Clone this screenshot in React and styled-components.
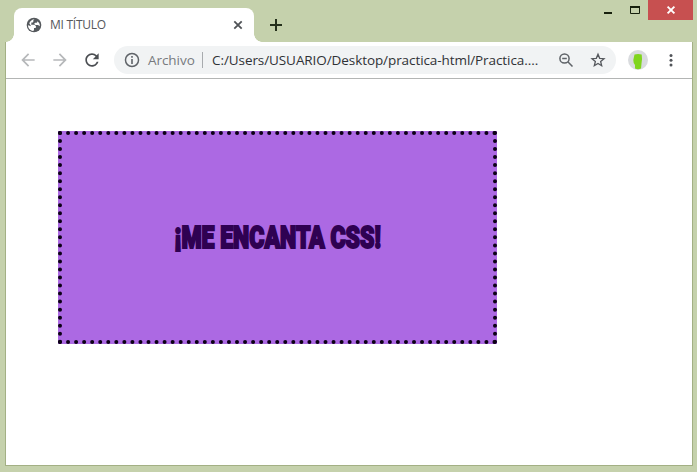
import React from "react";
import styled, { createGlobalStyle } from "styled-components";

const GlobalStyle = createGlobalStyle`
  * { box-sizing: border-box; }
  body { margin: 0; overflow: hidden; }
`;

const Window = styled.div`
  display: flex;
  flex-direction: column;
  width: 697px;
  height: 472px;
  padding: 0 4px 6px 5px;
  background: #c5d1ac;
  font-family: "Open Sans", "Noto Sans", sans-serif;
`;

const TitleBar = styled.header`
  display: flex;
  align-items: flex-start;
  height: 42px;
  flex: none;
`;

const Tab = styled.div`
  position: relative;
  display: flex;
  align-items: center;
  width: 240px;
  height: 34px;
  margin: 8px 0 0 9px;
  padding: 0 10px 0 12px;
  background: #fff;
  border-radius: 8px 8px 0 0;

  &::before,
  &::after {
    content: "";
    position: absolute;
    bottom: 0;
    width: 8px;
    height: 8px;
  }
  &::before {
    left: -8px;
    background: radial-gradient(circle at 0 0, transparent 7.5px, #fff 8px);
  }
  &::after {
    right: -8px;
    background: radial-gradient(circle at 100% 0, transparent 7.5px, #fff 8px);
  }
`;

const TabTitle = styled.span`
  flex: 1;
  margin-left: 8px;
  color: #55575b;
  font-size: 12px;
  line-height: 16px;
  letter-spacing: -0.25px;
`;

const NewTab = styled.div`
  display: flex;
  margin: 18px 0 0 15px;
`;

const Controls = styled.div`
  display: flex;
  height: 20px;
  margin-left: auto;
`;

const Control = styled.div`
  display: flex;
  align-items: center;
  justify-content: center;
  width: ${(p) => p.$width}px;
  height: 20px;
  background: ${(p) => (p.$danger ? "#c75050" : "transparent")};
`;

const Body = styled.div`
  display: flex;
  flex-direction: column;
  flex: 1;
  border: 1px solid #a3b084;
  border-top: 0;
  background: #fff;
`;

const Toolbar = styled.nav`
  display: flex;
  align-items: center;
  height: 37px;
  flex: none;
  padding: 0 13px 0 12px;
  border-bottom: 1px solid #b3b5b4;
`;

const NavButtons = styled.div`
  display: flex;
  gap: 12px;
  width: 96px;
`;

const Address = styled.div`
  display: flex;
  align-items: center;
  width: 502px;
  height: 28px;
  padding: 0 10px;
  border-radius: 14px;
  background: #f1f3f4;
`;

const Scheme = styled.span`
  width: 54px;
  margin-left: 8px;
  color: #777a7e;
  font-size: 13.5px;
  line-height: 18px;
  letter-spacing: -0.05px;
  white-space: nowrap;
`;

const Separator = styled.i`
  width: 1px;
  height: 16px;
  background: #a8abae;
`;

const Url = styled.span`
  flex: 1;
  margin-left: 9px;
  color: #303236;
  font-size: 13.5px;
  line-height: 18px;
  letter-spacing: -0.08px;
  white-space: nowrap;
`;

const Actions = styled.div`
  display: flex;
  gap: 16px;
`;

const Avatar = styled.div`
  display: flex;
  align-items: center;
  justify-content: center;
  width: 20px;
  height: 20px;
  margin-left: 12px;
  border-radius: 50%;
  background: #d9dbde;
`;

const Menu = styled.div`
  display: flex;
  margin-left: auto;
`;

const Page = styled.main`
  flex: 1;
  padding: 52px;
`;

const Banner = styled.section`
  display: flex;
  align-items: center;
  justify-content: center;
  width: 439px;
  height: 213px;
  border: 4px dotted #0c0016;
  background: #ac69e3;
`;

const Heading = styled.h1`
  margin: 0;
  color: #2f0152;
  font-family: Impact, Roboto, sans-serif;
  font-size: 30.5px;
  font-weight: 900;
  line-height: 40px;
  white-space: nowrap;
  -webkit-text-stroke: 2px #2f0152;
  transform: translateY(-0.5px) scaleX(0.755);
`;

const OpeningMark = styled.span`
  display: inline-block;
  transform: translateY(-3px);
`;

const Icon = ({ size = 16, box = "0 0 24 24", color = "#5f6368", children }) => (
  <svg width={size} height={size} viewBox={box} fill={color}>
    {children}
  </svg>
);

export default function App() {
  return (
    <>
      <GlobalStyle />
      <Window>
        <TitleBar>
          <Tab>
            <Icon color="#55595d">
              <circle cx="12" cy="12" r="11" />
              <path
                fill="#fff"
                d="M13 3.3c-1 .3-2 1-2 2.100v1.500c0 .8-.7 1.500-1.500 1.500H8v2c0 .8-.6 1.300-1.300 1.300h4.800c2 0 3.500 1.400 3.500 3.300 0 1-.7 1.600-1.700 1.600H12v2.600c0 .8-.6 1.500-1.400 1.700C6 20.600 3 17 3 12.500l4.700 1.200-2.800-4.500C6.200 5.800 9.400 3.200 13 3.300zM17 6.500c2.400 1.700 4 4 3.700 7.300L18 12h-3.500c-1.200 0-2-.7-2-1.700S13.300 8.500 14.500 8.500H16c.7 0 1-.8 1-2z"
              />
            </Icon>
            <TabTitle>MI TÍTULO</TabTitle>
            <Icon size={12} box="0 0 12 12">
              <path d="M2.300 2.300l7.400 7.400M9.700 2.300l-7.400 7.400" stroke="#505357" strokeWidth="1.800" />
            </Icon>
          </Tab>
          <NewTab>
            <Icon size={14} box="0 0 14 14">
              <path d="M7 1v12M1 7h12" stroke="#25301b" strokeWidth="2" />
            </Icon>
          </NewTab>
          <Controls>
            <Control $width={27}>
              <Icon size={12} box="0 0 12 12">
                <path d="M2 8h8v2H2z" fill="#17200d" />
              </Icon>
            </Control>
            <Control $width={27}>
              <Icon size={12} box="0 0 12 12">
                <path d="M1.500 2.500h9v7h-9z" fill="none" stroke="#17200d" />
                <path d="M1 2h10v2H1z" fill="#17200d" />
              </Icon>
            </Control>
            <Control $width={45} $danger>
              <Icon size={10} box="0 0 10 10">
                <path d="M1.600 1.600l6.800 6.800M8.400 1.600l-6.800 6.800" stroke="#fff" strokeWidth="1.900" />
              </Icon>
            </Control>
          </Controls>
        </TitleBar>
        <Body>
          <Toolbar>
            <NavButtons>
              <Icon size={20} color="#b6b8ba">
                <path d="M20 11H7.830l5.590-5.590L12 4l-8 8 8 8 1.410-1.410L7.830 13H20v-2z" />
              </Icon>
              <Icon size={20} color="#b6b8ba">
                <path d="M12 4l-1.410 1.410L16.170 11H4v2h12.170l-5.580 5.590L12 20l8-8z" />
              </Icon>
              <Icon size={20} color="#4c4f53">
                <path d="M17.650 6.350C16.200 4.900 14.210 4 12 4c-4.420 0-7.990 3.580-7.990 8s3.570 8 7.990 8c3.730 0 6.840-2.550 7.730-6h-2.080c-.82 2.330-3.040 4-5.650 4-3.310 0-6-2.690-6-6s2.690-6 6-6c1.660 0 3.140.69 4.220 1.780L13 11h7V4l-2.350 2.350z" />
              </Icon>
            </NavButtons>
            <Address>
              <Icon>
                <circle cx="12" cy="12" r="9.800" fill="none" stroke="#5f6368" strokeWidth="2.200" />
                <path d="M10.800 10.500h2.400V18h-2.400zM10.800 6h2.400v2.500h-2.400z" />
              </Icon>
              <Scheme>Archivo</Scheme>
              <Separator />
              <Url>C:/Users/USUARIO/Desktop/practica-html/Practica....</Url>
              <Actions>
                <Icon box="0 0 16 16">
                  <circle cx="6.500" cy="6.500" r="4.600" fill="none" stroke="#5f6368" strokeWidth="1.500" />
                  <path d="M4.200 6.500h4.600M9.800 9.800l4.700 4.700" fill="none" stroke="#5f6368" strokeWidth="1.500" />
                </Icon>
                <Icon>
                  <path
                    d="M12 3.500l2.500 6 6.500.5-5 4.300 1.500 6.300-5.500-3.300-5.500 3.300 1.500-6.300-5-4.300 6.500-.5z"
                    fill="none"
                    stroke="#55585d"
                    strokeWidth="2"
                  />
                </Icon>
              </Actions>
            </Address>
            <Avatar>
              <Icon size={20} box="0 0 20 20" color="#80d51d">
                <path d="M6.500 4.500Q10 3.500 13.700 4.500Q14.500 9 13.500 13.500L13 18.500Q10 20 7 18.500V15Q5.300 13.500 5.300 10z" />
              </Icon>
            </Avatar>
            <Menu>
              <Icon size={16} box="0 0 16 16" color="#515459">
                <circle cx="8" cy="3.500" r="1.500" />
                <circle cx="8" cy="8.300" r="1.500" />
                <circle cx="8" cy="13" r="1.500" />
              </Icon>
            </Menu>
          </Toolbar>
          <Page>
            <Banner>
              <Heading>
                <OpeningMark>¡</OpeningMark>ME ENCANTA CSS!
              </Heading>
            </Banner>
          </Page>
        </Body>
      </Window>
    </>
  );
}
